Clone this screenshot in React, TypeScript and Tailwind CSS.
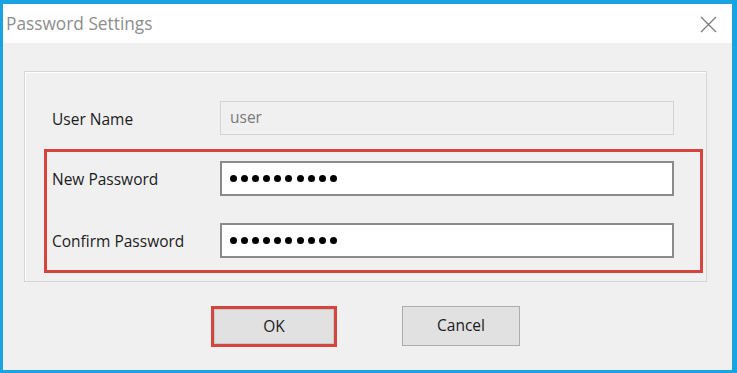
import React from 'react';

const font = { fontFamily: '"Open Sans", "Noto Sans", "Liberation Sans", sans-serif' };

function Field({ label, value, disabled }: { label: string; value: string; disabled?: boolean }) {
  return (
    <div className="flex items-center">
      <div className="w-[168px] text-[15.5px] text-[#1b1b22] pt-[3px]">{label}</div>
      {disabled ? (
        <div className="w-[454px] h-[34px] border border-[#d4d4d4] bg-[#f0f0f0] flex items-center pl-[9px] text-[15.5px] text-[#7a7a7a]">
          {value}
        </div>
      ) : (
        <div className="w-[454px] h-[35px] border-2 border-[#8a8a8a] bg-white flex items-center pl-[8px] gap-[4.1px]">
          {Array.from({ length: 10 }).map((_, i) => (
            <span key={i} className="w-[7px] h-[7px] rounded-full bg-black" />
          ))}
        </div>
      )}
    </div>
  );
}

export default function App() {
  return (
    <div
      className="w-[737px] h-[373px] border-l-[3px] border-t-[4px] border-r-[5px] border-b-[3px] border-[#1aa3e2] flex flex-col bg-[#f0f0f0]"
      style={font}
    >
      {/* title bar */}
      <div className="h-[39px] bg-white flex items-center justify-between pl-[3px] pr-[15px] shrink-0">
        <span className="text-[17.3px] text-[#8d8d8d]">Password Settings</span>
        <svg width="17" height="17" viewBox="0 0 17 17" className="mt-[2px]">
          <path d="M1 1L16 16M16 1L1 16" stroke="#7b7b7b" strokeWidth="1.3" fill="none" />
        </svg>
      </div>

      {/* body */}
      <div className="flex-1 flex flex-col pl-[21px] pt-[28px]">
        <div className="w-[683px] h-[211px] border border-[#d6d6d6] shadow-[inset_1px_1px_0_#ffffff] flex flex-col pt-[29px]">
          <div className="pl-[27px]">
            <Field label="User Name" value="user" disabled />
          </div>
          <div className="ml-[19px] mr-[3px] mt-[14px] border-[3px] border-[#d5443f] pt-[9px] pb-[12px] pl-[5px] flex flex-col gap-[27px]">
            <Field label="New Password" value="" />
            <Field label="Confirm Password" value="" />
          </div>
        </div>

        <div className="flex justify-center gap-[65px] mt-[24px] pr-[25px]">
          <button className="w-[126px] h-[41px] border-[3px] border-[#d5443f] bg-[#e1e1e1] text-[15.5px] text-[#1b1b22] shadow-[inset_0_0_0_1px_#c8c8c8]">
            OK
          </button>
          <button className="w-[118px] h-[40px] border border-[#adadad] bg-[#e1e1e1] text-[15.5px] text-[#1b1b22]">
            Cancel
          </button>
        </div>
      </div>
    </div>
  );
}
